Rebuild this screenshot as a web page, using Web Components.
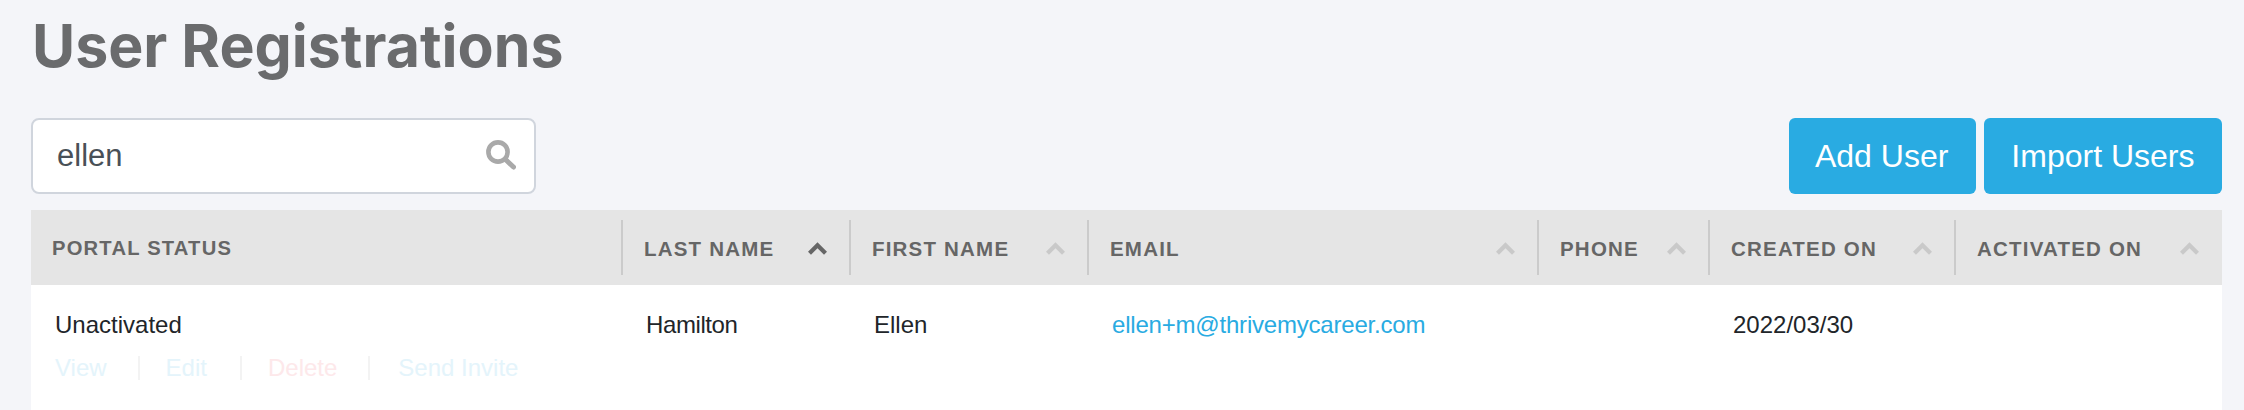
<!DOCTYPE html>
<html><head><meta charset="utf-8"><style>
html,body{margin:0;padding:0;height:100%;overflow:hidden;background:#f4f5f9;}
</style></head><body>
<user-registrations>
  <page-title slot="title">User Registrations</page-title>
  <search-box slot="search" value="ellen"></search-box>
  <action-button slot="actions">Add User</action-button>
  <action-button slot="actions">Import Users</action-button>
  <data-table slot="table">
    <table-head label="PORTAL STATUS" plain></table-head>
    <table-head label="LAST NAME" active divider></table-head>
    <table-head label="FIRST NAME" divider></table-head>
    <table-head label="EMAIL" divider></table-head>
    <table-head label="PHONE" divider></table-head>
    <table-head label="CREATED ON" divider></table-head>
    <table-head label="ACTIVATED ON" divider></table-head>
    <table-cell first>Unactivated<row-actions></row-actions></table-cell>
    <table-cell tight>Hamilton</table-cell>
    <table-cell>Ellen</table-cell>
    <table-cell link>ellen+m@thrivemycareer.com</table-cell>
    <table-cell></table-cell>
    <table-cell>2022/03/30</table-cell>
    <table-cell></table-cell>
  </data-table>
</user-registrations>
<script>
function def(name,css,html){
  customElements.define(name,class extends HTMLElement{
    constructor(){super();this.attachShadow({mode:'open'}).innerHTML='<style>'+css+'</style>'+(typeof html==='function'?html(this):html);}
  });
}
const SANS='"Liberation Sans",Arial,sans-serif';
def('user-registrations',
 `:host{display:flex;flex-direction:column;height:410px;box-sizing:border-box;padding:0 22px 0 31px;font-family:${SANS};}
  .top{display:flex;height:76px;margin-top:20px;justify-content:space-between;align-items:flex-start;}
  .btns{display:flex;gap:8px;}
  .table{display:block;margin-top:16px;flex:1;}`,
 `<slot name="title"></slot><div class="top"><slot name="search"></slot><div class="btns"><slot name="actions"></slot></div></div><div class="table"><slot name="table"></slot></div>`);
def('page-title',
 `:host{display:block;height:98px;box-sizing:border-box;padding:10px 0 0 1px;font:700 59px/72px Inter,sans-serif;color:#6a6b6d;letter-spacing:0;white-space:nowrap;}`,
 `<slot></slot>`);
def('search-box',
 `:host{display:flex;align-items:center;justify-content:space-between;width:505px;height:76px;box-sizing:border-box;background:#fff;border:2px solid #d0d5dd;border-radius:8px;padding:0 18px 0 24px;font:31px/36px ${SANS};color:#495057;}
  svg{display:block;width:30px;height:30px;margin-top:-3px;}`,
 el=>`<span>${el.getAttribute('value')}</span><svg viewBox="0 0 30 30" fill="none" stroke="#a9a9a9"><circle cx="12" cy="12" r="9.6" stroke-width="4.6"/><path d="M19.5 19.5L27.5 27" stroke-width="5" stroke-linecap="round"/></svg>`);
def('action-button',
 `:host{display:flex;align-items:center;height:76px;box-sizing:border-box;padding:0 27.5px;background:#29abe2;border-radius:6px;color:#fff;font:32px/38px ${SANS};white-space:nowrap;}
  :host(:first-of-type){padding-left:26px;}`,
 `<slot></slot>`);
def('data-table',
 `:host{display:grid;grid-template-columns:590px 228px 238px 450px 171px 246px 268px;grid-template-rows:75px 1fr;height:100%;background:#fff;}`,
 `<slot></slot>`);
def('table-head',
 `:host{display:block;background:#e5e5e5;height:75px;box-sizing:border-box;padding:10px 0;}
  .in{display:flex;align-items:center;justify-content:space-between;height:55px;box-sizing:border-box;padding:2px 22px 0 21px;border-left:2px solid transparent;}
  :host([divider]) .in{border-left-color:#cbcbcb;}
  :host([plain]) .in{border-left:0;padding-top:0;}
  :host(:nth-of-type(7)) .in{padding-right:23px;}
  span{font:700 20.5px/24px ${SANS};letter-spacing:1.2px;color:#666;white-space:nowrap;}
  :host([plain]) span{font-size:20.2px;}
  svg{display:block;width:19px;height:13px;flex:none;}`,
 el=>`<div class="in"><span>${el.getAttribute('label')}</span>`+(el.hasAttribute('plain')?'':`<svg viewBox="0 0 19 13" fill="none" stroke="${el.hasAttribute('active')?'#666':'#c9c9c9'}" stroke-width="4.2"><path d="M1.5 11.2L9.5 3.2L17.5 11.2"/></svg>`)+`</div>`);
def('table-cell',
 `:host{display:block;box-sizing:border-box;padding:26px 0 0 25px;font:24px/28px ${SANS};color:#212529;white-space:nowrap;}
  :host([first]){padding-left:24px;}
  :host([link]){color:#29abe2;letter-spacing:-.2px;}
  :host([tight]){letter-spacing:-.4px;}`,
 `<slot></slot>`);
def('row-actions',
 `:host{display:flex;margin-top:17px;height:24px;font:24px/24px ${SANS};}
  a{display:block;color:#e4f4fb;padding-right:31px;}
  a+a{border-left:2px solid #f3f3f3;padding-left:26px;}
  a.e{padding-right:33px;}
  a.d{color:#fde8ea;}
  a.s{padding-left:28px;}`,
 `<a>View</a><a class="e">Edit</a><a class="d">Delete</a><a class="s">Send Invite</a>`);
</script>
</body></html>
